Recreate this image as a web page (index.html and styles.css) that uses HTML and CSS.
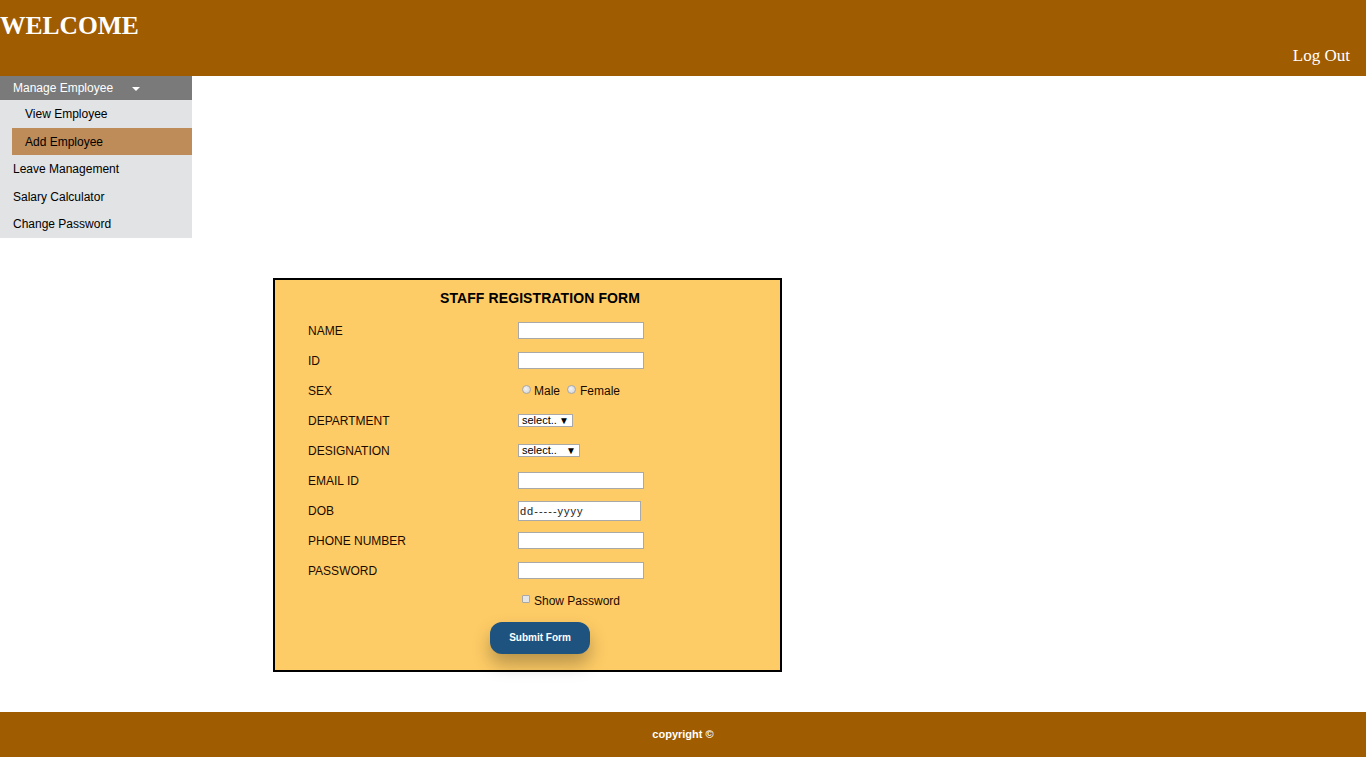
FILE: index.html
```html
<!DOCTYPE html>
<html>
<head>
<meta charset="utf-8">
<title>Add Employee</title>
<link rel="stylesheet" href="styles.css">
</head>
<body>
<header class="topbar">
  <h1 class="brand">WELCOME</h1>
  <div class="logout-row"><a class="logout" href="#">Log Out</a></div>
</header>
<nav class="sidebar">
  <div class="menu-head">Manage Employee <span class="caret"></span></div>
  <div class="submenu">
    <a class="sub-item" href="#">View Employee</a>
    <a class="sub-item active" href="#">Add Employee</a>
  </div>
  <a class="menu-item" href="#">Leave Management</a>
  <a class="menu-item" href="#">Salary Calculator</a>
  <a class="menu-item" href="#">Change Password</a>
</nav>
<main class="content">
  <form class="reg-form">
    <div class="form-title">STAFF REGISTRATION FORM</div>
    <div class="form-grid">
      <label class="lbl">NAME</label>
      <div class="fld"><input class="txt" type="text"></div>
      <label class="lbl">ID</label>
      <div class="fld"><input class="txt" type="text"></div>
      <label class="lbl">SEX</label>
      <div class="fld"><span class="radio"></span>Male<span class="radio r2"></span>Female</div>
      <label class="lbl">DEPARTMENT</label>
      <div class="fld"><span class="sel sel-dept">select..</span></div>
      <label class="lbl">DESIGNATION</label>
      <div class="fld"><span class="sel sel-desig">select..</span></div>
      <label class="lbl">EMAIL ID</label>
      <div class="fld"><input class="txt" type="text"></div>
      <label class="lbl">DOB</label>
      <div class="fld"><input class="txt dob" type="text" value="dd-----yyyy"></div>
      <label class="lbl">PHONE NUMBER</label>
      <div class="fld"><input class="txt" type="text"></div>
      <label class="lbl">PASSWORD</label>
      <div class="fld"><input class="txt" type="password"></div>
      <span class="lbl"></span>
      <div class="fld"><span class="check"></span>Show Password</div>
    </div>
    <div class="btn-row"><button class="submit" type="button">Submit Form</button></div>
  </form>
</main>
<footer class="footer">copyright &copy;</footer>
</body>
</html>
```
FILE: styles.css
```css
* { box-sizing: border-box; }
html, body { margin: 0; padding: 0; background: #fff; }
body { font-family: "Liberation Sans", Arial, sans-serif; font-size: 12px; color: #000; padding-bottom: 11px; }

.topbar { background: #a05c00; height: 76px; padding-top: 11px; }
.brand { margin: 0; font-family: "Liberation Serif", "Times New Roman", serif; font-weight: bold; font-size: 25.5px; line-height: 30px; color: #fff; }
.logout-row { text-align: right; padding-right: 16px; margin-top: 5px; line-height: 20px; }
.logout { font-family: "Liberation Serif", "Times New Roman", serif; font-size: 17px; color: #fff; text-decoration: none; }

.sidebar { width: 192px; background: #e2e3e5; }
.menu-head { background: #7a7a7a; color: #fff; height: 24px; line-height: 24px; padding-left: 13px; display: flex; align-items: center; }
.caret { width: 0; height: 0; border-left: 4px solid transparent; border-right: 4px solid transparent; border-top: 4px solid #fff; margin-left: 19px; margin-top: 2px; }
.submenu { padding-left: 12px; }
.sub-item, .menu-item { display: block; height: 27.6px; line-height: 28.6px; color: #000; text-decoration: none; }
.sub-item { padding-left: 13px; }
.sub-item.active { background: #bd8c58; }
.menu-item { padding-left: 13px; }

.content { padding: 40px 0 40px 273px; }
.reg-form { width: 509px; background: #fecc66; border: 2px solid #000; padding: 10px 8px 16px 33px; }
.form-title { text-align: center; font-weight: bold; font-size: 14px; line-height: 16px; letter-spacing: 0.1px; margin-bottom: 10px; }
.form-grid { display: grid; grid-template-columns: 210px 1fr; grid-auto-rows: 30px; }
.lbl { display: flex; align-items: center; font-size: 12px; color: #1a0a00; }
.fld { display: flex; align-items: center; font-size: 12px; color: #1a0a00; }
.txt { width: 126px; height: 17px; border: 1px solid #a9a9a9; background: #fff; padding: 0 2px; font-family: "Liberation Sans", Arial, sans-serif; font-size: 11px; outline: none; }
.dob { width: 123px; height: 20px; color: #222; font-size: 11px; padding-left: 1px; letter-spacing: 1px; }
.radio { display: inline-block; width: 9px; height: 9px; border-radius: 50%; border: 1px solid #a8a8a8; background: radial-gradient(circle at 40% 40%, #f4f4f4, #cfcfcf); margin: 0 3px 0 4px; position: relative; top: -1px; }
.radio.r2 { margin-left: 7px; margin-right: 4px; }
.check { display: inline-block; width: 8px; height: 8px; border: 1px solid #a8a8a8; background: #e6e6e6; border-radius: 1px; margin: 0 4px 0 4px; position: relative; top: -2px; }
.sel { position: relative; display: inline-block; height: 13px; line-height: 11px; border: 1px solid #a9a9a9; background: #fff; font-size: 11px; padding-left: 3px; color: #000; }
.sel::after { content: "\25BC"; position: absolute; top: 0; font-size: 10px; line-height: 11px; }
.sel-dept { width: 55px; }
.sel-dept::after { left: 40px; }
.sel-desig { width: 62px; }
.sel-desig::after { left: 47px; }

.btn-row { text-align: center; margin-top: 6px; }
.submit { width: 100px; height: 32px; border: none; border-radius: 12px; background: #1e5380; color: #fff; font-family: "Liberation Sans", Arial, sans-serif; font-weight: bold; font-size: 10px; box-shadow: 0 10px 18px rgba(0,0,0,0.28); }

.footer { background: #a05c00; height: 45px; line-height: 45px; text-align: center; color: #fff; font-weight: bold; font-size: 11px; }
```
